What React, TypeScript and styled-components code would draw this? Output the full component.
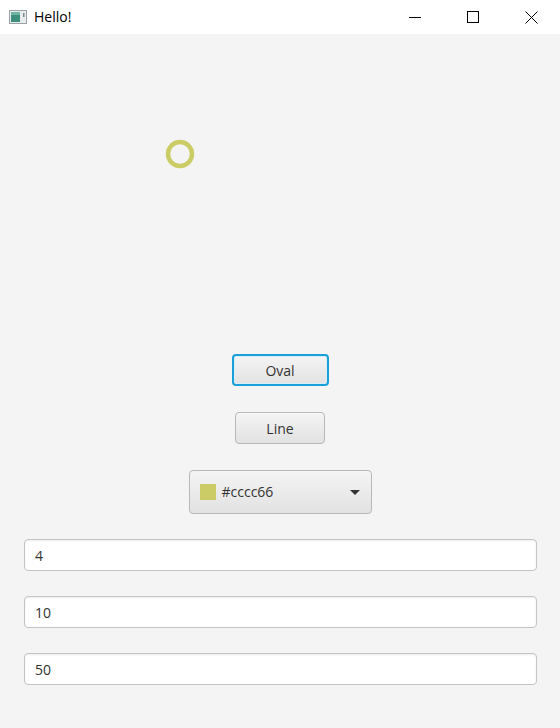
import React, { FC } from 'react';
import styled, { createGlobalStyle } from 'styled-components';

const GlobalStyle = createGlobalStyle`
  html, body {
    margin: 0;
    padding: 0;
    background: #f4f4f4;
  }
  body {
    font-family: 'Segoe UI', 'Open Sans', 'Noto Sans', sans-serif;
  }
`;

const Window = styled.div`
  display: flex;
  flex-direction: column;
  width: 560px;
  height: 728px;
  overflow: hidden;
  background: #f4f4f4;
`;

const TitleBar = styled.div`
  display: flex;
  align-items: center;
  height: 34px;
  background: #ffffff;
`;

const TitleIcon = styled.div`
  display: flex;
  margin-left: 9px;
  margin-right: 7px;
`;

const Title = styled.span`
  flex: 1;
  font-family: 'Open Sans', sans-serif;
  font-size: 14px;
  color: #000000;
  padding-bottom: 1px;
`;

const WinButton = styled.div`
  display: flex;
  align-items: center;
  justify-content: center;
  width: 58px;
  height: 34px;
`;

const Content = styled.div`
  display: flex;
  flex-direction: column;
  align-items: center;
`;

const Canvas = styled.svg`
  display: block;
  width: 560px;
  height: 320px;
`;

const Button = styled.div<{ $focused?: boolean; $width: number }>`
  display: flex;
  align-items: center;
  justify-content: center;
  box-sizing: border-box;
  width: ${(p) => p.$width}px;
  height: 32px;
  margin-bottom: 26px;
  font-family: 'Open Sans', sans-serif;
  font-size: 14px;
  color: #333333;
  border-radius: 4px;
  background: linear-gradient(to bottom, #f4f4f4, #e2e2e2);
  border: ${(p) => (p.$focused ? '2px solid #1aa0d8' : '1px solid #b8b8b8')};
  box-shadow: ${(p) => (p.$focused ? 'inset 0 0 0 1px #d6eefa' : 'inset 0 1px 0 #fafafa')};
`;

const Combo = styled.div`
  display: flex;
  align-items: center;
  box-sizing: border-box;
  width: 183px;
  height: 44px;
  margin-bottom: 25px;
  padding: 0 11px 0 10px;
  border: 1px solid #b8b8b8;
  border-radius: 4px;
  background: linear-gradient(to bottom, #f4f4f4, #e2e2e2);
`;

const Swatch = styled.span<{ $color: string }>`
  width: 16px;
  height: 16px;
  margin-right: 6px;
  background: ${(p) => p.$color};
`;

const ComboText = styled.span`
  flex: 1;
  font-family: 'Open Sans', sans-serif;
  font-size: 14px;
  color: #333333;
  padding-bottom: 1px;
`;

const Arrow = styled.span`
  width: 0;
  height: 0;
  border-left: 5px solid transparent;
  border-right: 5px solid transparent;
  border-top: 5px solid #333333;
`;

const Fields = styled.div`
  display: flex;
  flex-direction: column;
  gap: 25px;
  align-self: stretch;
  padding: 0 23px 0 24px;
`;

const Field = styled.input`
  box-sizing: border-box;
  width: 100%;
  height: 32px;
  padding: 0 10px;
  margin: 0;
  font-family: 'Open Sans', sans-serif;
  font-size: 14px;
  color: #333333;
  background: #ffffff;
  border: 1px solid #c4c4c4;
  border-radius: 4px;
  box-shadow: inset 0 1px 2px rgba(0, 0, 0, 0.08);
  outline: none;
`;

const AppIcon: FC = () => (
  <svg width="18" height="16" viewBox="0 0 18 16">
    <rect x="0.5" y="1.5" width="17" height="13" fill="#e8ecec" stroke="#9aa4a6" />
    <rect x="2" y="3" width="9" height="10" fill="#3f8f7e" />
    <rect x="2" y="3" width="9" height="3" fill="#6fb3a2" />
    <rect x="14" y="4" width="1.5" height="4" fill="#7c8a8c" />
  </svg>
);

const App: FC = () => {
  const values = ['4', '10', '50'];
  return (
    <Window>
      <GlobalStyle />
      <TitleBar>
        <TitleIcon>
          <AppIcon />
        </TitleIcon>
        <Title>Hello!</Title>
        <WinButton>
          <svg width="12" height="12" viewBox="0 0 12 12">
            <line x1="0" y1="6.5" x2="12" y2="6.5" stroke="#000" strokeWidth="1" />
          </svg>
        </WinButton>
        <WinButton>
          <svg width="12" height="12" viewBox="0 0 12 12">
            <rect x="0.5" y="0.5" width="11" height="11" fill="none" stroke="#000" strokeWidth="1" />
          </svg>
        </WinButton>
        <WinButton>
          <svg width="13" height="13" viewBox="0 0 13 13">
            <path d="M0.5 0.5 L12.5 12.5 M12.5 0.5 L0.5 12.5" stroke="#000" strokeWidth="1" />
          </svg>
        </WinButton>
      </TitleBar>
      <Content>
        <Canvas viewBox="0 0 560 320">
          <circle cx="180" cy="120" r="12" fill="none" stroke="#cccc66" strokeWidth="4.5" />
        </Canvas>
        <Button $focused $width={97}>Oval</Button>
        <Button $width={90}>Line</Button>
        <Combo>
          <Swatch $color="#cccc66" />
          <ComboText>#cccc66</ComboText>
          <Arrow />
        </Combo>
        <Fields>
          {values.map((v) => (
            <Field key={v} defaultValue={v} />
          ))}
        </Fields>
      </Content>
    </Window>
  );
};

export default App;
